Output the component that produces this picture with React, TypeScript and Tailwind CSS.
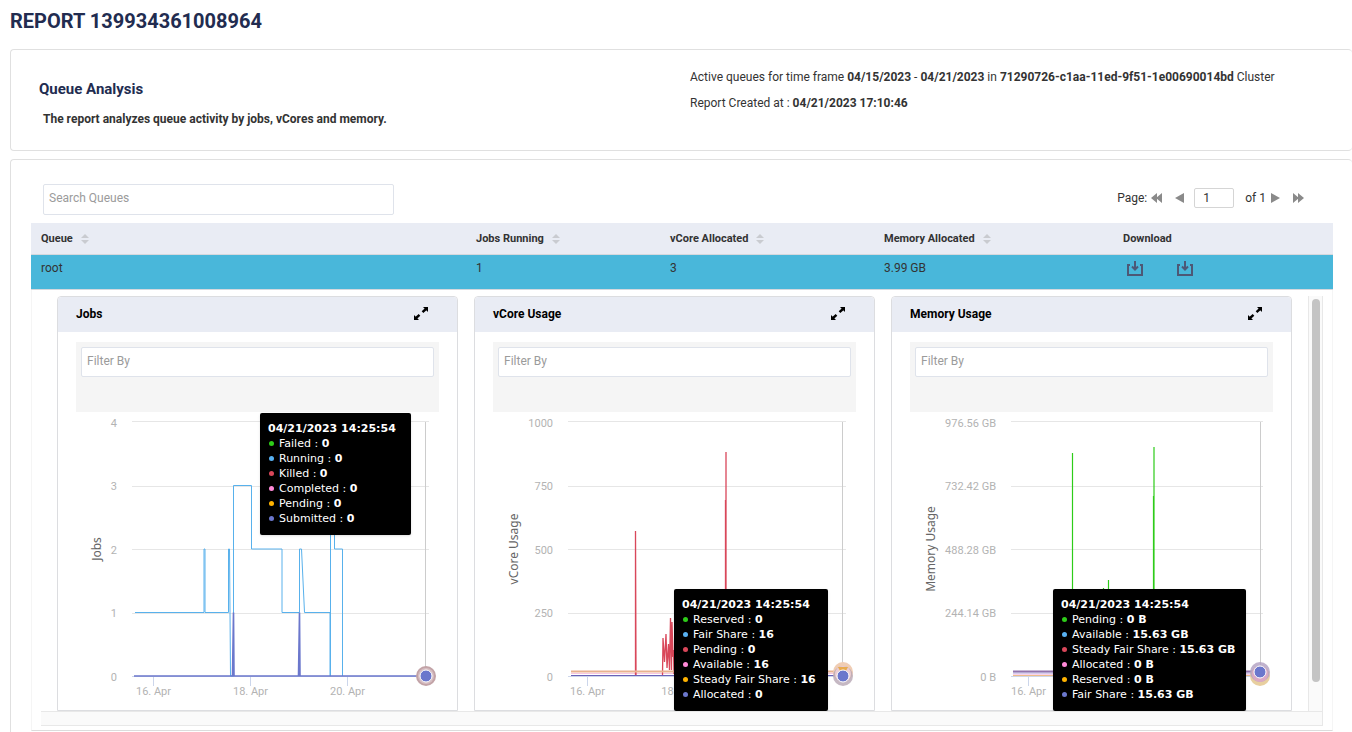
import { useState } from "react";

const GRID_Y = [9.5, 74.5, 137.5, 201.5, 264.5];
const LABEL_Y = [15, 78, 142, 205, 269];
const DOTS = [
  "bg-[#2ecc19]",
  "bg-[#58b1f2]",
  "bg-[#d9475a]",
  "bg-[#ff8ad8]",
  "bg-[#ffb300]",
  "bg-[#6b77cc]",
];

const jobs = {
  title: "Jobs",
  axis: "Jobs",
  axisX: 25,
  left: 56,
  labelX: 41,
  cross: 349.5,
  labels: ["4", "3", "2", "1", "0"],
  ticks: [
    { x: 77.5, label: "16. Apr" },
    { x: 174.5, label: "18. Apr" },
    { x: 271.5, label: "20. Apr" },
  ],
  lines: [
    {
      d: "M59 200.5H128V137H129V200.5H152.5V137H153.5L154.5 264H157.5V73.5H175.5V137H206V200.5H223.5V137H225.5L228.5 200.5H254V264H254.5V73.5H258.5V137H266.5V264",
      color: "#58b1ec",
      width: 1,
    },
    {
      d: "M58 264H156.5L157.5 200.5L158 264H222.5L223.5 200.5L224 264H350",
      color: "#6b77cc",
      width: 1.6,
    },
  ],
  tooltipPos: "left-[184px] top-[1px] w-[151px]",
  values: [
    ["Failed", "0"],
    ["Running", "0"],
    ["Killed", "0"],
    ["Completed", "0"],
    ["Pending", "0"],
    ["Submitted", "0"],
  ],
};

const vcores = {
  title: "vCore Usage",
  axis: "vCore Usage",
  axisX: 25,
  left: 75,
  labelX: 60,
  cross: 349.5,
  labels: ["1000", "750", "500", "250", "0"],
  ticks: [
    { x: 94.5, label: "16. Apr" },
    { x: 174.5, label: "18" },
  ],
  lines: [
    { d: "M78 261.5H350", color: "#f7c6e0", width: 1 },
    {
      d: "M142.5 263V119L143 263M169.5 263L170 226L171.5 250L173 222L174 256L175.5 232L176.5 258L177.5 206L178.5 258L179 210L180 245L180.5 238L181 262M232.5 263V88M233 263V40",
      color: "#d9475a",
      width: 1.3,
    },
    { d: "M78 259.5H350", color: "#e9b18f", width: 2 },
    { d: "M78 263.5H350", color: "#6b62b8", width: 1 },
  ],
  tooltipPos: "left-[181px] top-[177px] w-[154px]",
  values: [
    ["Reserved", "0"],
    ["Fair Share", "16"],
    ["Pending", "0"],
    ["Available", "16"],
    ["Steady Fair Share", "16"],
    ["Allocated", "0"],
  ],
};

const memory = {
  title: "Memory Usage",
  axis: "Memory Usage",
  axisX: 25,
  left: 101,
  labelX: 86,
  cross: 350.5,
  labels: ["976.56 GB", "732.42 GB", "488.28 GB", "244.14 GB", "0 B"],
  ticks: [{ x: 118.5, label: "16. Apr" }],
  lines: [
    {
      d: "M162.5 263V41M193.5 263V176M198.5 263V168M243.5 263V84M244 263V35",
      color: "#2ecc19",
      width: 1.2,
    },
    { d: "M103 263.5H350", color: "#edbd8b", width: 1 },
    { d: "M103 262H350", color: "#f3a8d8", width: 1 },
    { d: "M103 261H350", color: "#b5c3ee", width: 1 },
    { d: "M103 259.5H350", color: "#9273ad", width: 2 },
  ],
  tooltipPos: "left-[143px] top-[177px] w-[193px]",
  values: [
    ["Pending", "0 B"],
    ["Available", "15.63 GB"],
    ["Steady Fair Share", "15.63 GB"],
    ["Allocated", "0 B"],
    ["Reserved", "0 B"],
    ["Fair Share", "15.63 GB"],
  ],
};

function JobsMarker() {
  return (
    <g>
      <circle cx="350" cy="264" r="10" fill="#c2a3a7" />
      <circle cx="350" cy="264" r="8" fill="#d7bfc3" />
      <circle cx="350" cy="264" r="6" fill="#6b77cc" stroke="#fff" />
    </g>
  );
}

function VCoreMarker() {
  return (
    <g>
      <circle cx="350" cy="260" r="10" fill="#f0cdb4" />
      <circle cx="350" cy="264" r="10" fill="#b7a6b4" fillOpacity="0.8" />
      <circle cx="350" cy="262" r="8" fill="#eccdd2" />
      <path d="M345 255H355L353 259H347Z" fill="#e8ab4e" />
      <circle cx="350" cy="264" r="6" fill="#6b77cc" stroke="#fff" />
    </g>
  );
}

function MemoryMarker() {
  return (
    <g>
      <circle cx="350" cy="264" r="10" fill="#e8cf9f" />
      <circle cx="350" cy="260" r="10" fill="#b09fc0" fillOpacity="0.8" />
      <circle cx="350" cy="262" r="8" fill="#dba9c4" />
      <circle cx="350" cy="260" r="6" fill="#6b77cc" stroke="#fff" />
    </g>
  );
}

function SortIcon() {
  return (
    <svg width="8" height="10" viewBox="0 0 8 10" fill="#c9cbd0">
      <path d="M4 0L8 4H0Z" />
      <path d="M0 6H8L4 10Z" />
    </svg>
  );
}

function DownloadIcon() {
  return (
    <svg width="16" height="15" viewBox="0 0 16 15" fill="none" stroke="#4d5876">
      <path d="M3 4H1V14H15V4H13" strokeWidth="2" />
      <path d="M8 0V8" strokeWidth="2" />
      <path d="M5 5.5L8 8.5L11 5.5" strokeWidth="2" />
    </svg>
  );
}

function ExpandIcon() {
  return (
    <svg width="14" height="13" viewBox="0 0 14 13">
      <path d="M9 0H14V5Z" />
      <path d="M0 8V13H5Z" />
      <path d="M12.5 1.5L8.5 5.2M1.5 11.5L5.5 7.8" stroke="#000" strokeWidth="2.4" />
    </svg>
  );
}

function Chart({ data, marker }) {
  return (
    <div className="relative h-[320px]">
      <svg width="363" height="320" fontFamily="Roboto, sans-serif" fontSize="11">
        {GRID_Y.map((y, i) => (
          <line
            key={y}
            x1={data.left}
            x2="353"
            y1={y}
            y2={y}
            stroke={i === 4 ? "#ccd6eb" : "#e6e6e6"}
          />
        ))}
        {data.labels.map((label, i) => (
          <text key={label} x={data.labelX} y={LABEL_Y[i]} textAnchor="end" fill="#b3b3b3">
            {label}
          </text>
        ))}
        {data.ticks.map((tick) => (
          <g key={tick.label}>
            {tick.label !== "18" && (
              <line x1={tick.x} x2={tick.x} y1="265" y2="274" stroke="#ccd6eb" />
            )}
            <text x={tick.x} y="283" textAnchor="middle" fill="#b3b3b3">
              {tick.label}
            </text>
          </g>
        ))}
        <text
          transform={`translate(${data.axisX} 137) rotate(-90)`}
          textAnchor="middle"
          fill="#666"
          fontFamily="'Noto Sans', sans-serif"
          fontSize="12"
        >
          {data.axis}
        </text>
        <line x1={data.cross} x2={data.cross} y1="10" y2="264" stroke="#ccc" />
        {data.lines.map((line) => (
          <path key={line.d} d={line.d} fill="none" stroke={line.color} strokeWidth={line.width} />
        ))}
        {marker}
      </svg>
      <div
        className={`absolute ${data.tooltipPos} h-[122px] rounded-xs bg-black p-2 font-['DejaVu_Sans',sans-serif] text-[11px] leading-[15px] whitespace-nowrap text-white shadow-sm`}
      >
        <div className="font-bold">04/21/2023 14:25:54</div>
        {data.values.map(([name, value], i) => (
          <div key={name} className="flex items-center gap-[5px] pl-px">
            <span className={`size-[5px] rounded-full ${DOTS[i]}`} />
            <span>
              {name} : <b>{value}</b>
            </span>
          </div>
        ))}
      </div>
    </div>
  );
}

function ChartCard({ data, marker }) {
  return (
    <div className="min-w-0 flex-1 rounded-t border border-[#dcdde0]">
      <div className="flex h-[35px] items-center justify-between rounded-t bg-[#e9ecf4] pr-[29px] pb-[2px] pl-[18px]">
        <h3 className="text-xs font-bold text-black">{data.title}</h3>
        <button aria-label={`Expand ${data.title}`}>
          <ExpandIcon />
        </button>
      </div>
      <div className="px-[18px] pt-[10px]">
        <div className="h-[70px] bg-[#f5f5f5] p-[5px]">
          <input
            aria-label={`Filter ${data.title}`}
            placeholder="Filter By"
            className="h-[30px] w-full rounded-xs border border-[#dfe3eb] bg-white px-[5px] pb-[2px] text-xs placeholder:text-[#9b9b9b]"
          />
        </div>
        <Chart data={data} marker={marker} />
      </div>
    </div>
  );
}

function HeaderCell({ label, width }) {
  return (
    <th className={`${width} border-b border-[#d5d8dd] px-[10px] pt-px text-left text-[11px] font-bold`}>
      <button className="flex items-center gap-2">
        {label}
        <SortIcon />
      </button>
    </th>
  );
}

function Pager() {
  const [page, setPage] = useState("1");

  return (
    <div className="flex items-center text-xs">
      <label htmlFor="page">Page:</label>
      <button aria-label="First page" className="ml-1">
        <svg width="13" height="10" viewBox="0 0 13 10" fill="#8a8a8a">
          <path d="M6 0V10L0 5ZM11 0V10L5 5Z" />
        </svg>
      </button>
      <button aria-label="Previous page" className="ml-[11px]">
        <svg width="9" height="10" viewBox="0 0 9 10" fill="#8a8a8a">
          <path d="M9 0V10L0 5Z" />
        </svg>
      </button>
      <input
        id="page"
        value={page}
        onChange={(e) => setPage(e.target.value)}
        className="mr-[11px] ml-[10px] h-5 w-10 rounded-xs border border-[#d5d5d5] px-2"
      />
      <span>of 1</span>
      <button aria-label="Next page" className="ml-[5px]">
        <svg width="9" height="10" viewBox="0 0 9 10" fill="#8a8a8a">
          <path d="M0 0V10L9 5Z" />
        </svg>
      </button>
      <button aria-label="Last page" className="ml-[13px]">
        <svg width="11" height="10" viewBox="0 0 11 10" fill="#8a8a8a">
          <path d="M0 0V10L6 5ZM5 0V10L11 5Z" />
        </svg>
      </button>
    </div>
  );
}

function QueueTable() {
  return (
    <table className="w-full table-fixed border-separate border-spacing-0 text-xs">
      <thead>
        <tr className="h-8 bg-[#e9ecf4]">
          <HeaderCell label="Queue" width="w-auto" />
          <HeaderCell label="Jobs Running" width="w-[194px]" />
          <HeaderCell label="vCore Allocated" width="w-[214px]" />
          <HeaderCell label="Memory Allocated" width="w-[239px]" />
          <th className="w-[220px] border-b border-[#d5d8dd] px-[10px] pt-px text-left text-[11px] font-bold">
            Download
          </th>
        </tr>
      </thead>
      <tbody>
        <tr className="h-[35px] bg-[#49b7da] align-top">
          <td className="border-b border-[#d5d8dd] px-[10px] pt-[5px]">root</td>
          <td className="border-b border-[#d5d8dd] px-[10px] pt-[5px]">1</td>
          <td className="border-b border-[#d5d8dd] px-[10px] pt-[5px]">3</td>
          <td className="border-b border-[#d5d8dd] px-[10px] pt-[5px]">3.99 GB</td>
          <td className="border-b border-[#d5d8dd] px-[14px] pt-[6px]">
            <div className="flex gap-[34px]">
              <button aria-label="Download report">
                <DownloadIcon />
              </button>
              <button aria-label="Download data">
                <DownloadIcon />
              </button>
            </div>
          </td>
        </tr>
        <tr>
          <td
            colSpan={5}
            className="border-x border-b border-x-[#f5f5f5] border-b-[#dcdcdc] px-[9px] pt-[6px] pb-1"
          >
            <div className="flex">
              <div className="flex h-[415px] min-w-0 flex-1 gap-4 overflow-hidden px-4">
                <ChartCard data={jobs} marker={<JobsMarker />} />
                <ChartCard data={vcores} marker={<VCoreMarker />} />
                <ChartCard data={memory} marker={<MemoryMarker />} />
              </div>
              <div className="w-[15px] border-x border-[#e8e8e8] bg-[#fafafa] px-[3px] pt-[3px]">
                <div className="-mr-px h-[383px] rounded-full bg-[#c4c4c4]" />
              </div>
            </div>
            <div className="h-[15px] border-y border-r border-[#e8e8e8] bg-[#fafafa]" />
          </td>
        </tr>
      </tbody>
    </table>
  );
}

function App() {
  return (
    <div className="overflow-hidden bg-white pl-[10px] font-[Roboto,sans-serif] text-[#333]">
      <h1 className="pt-[6px] text-xl leading-[30px] font-bold text-[#222c50]">
        REPORT 139934361008964
      </h1>

      <section className="mt-[13px] flex h-[102px] rounded border border-r-0 border-[#e0e0e0] pl-7">
        <div className="w-[651px] pt-[29px]">
          <h2 className="text-[15px] leading-5 font-bold text-[#222c50]">Queue Analysis</h2>
          <p className="mt-[10px] pl-1 text-xs leading-5 font-bold">
            The report analyzes queue activity by jobs, vCores and memory.
          </p>
        </div>
        <div className="flex-1 pt-[14px] text-xs leading-[26px]">
          <p>
            Active queues for time frame <b>04/15/2023</b> - <b>04/21/2023</b> in{" "}
            <b>71290726-c1aa-11ed-9f51-1e00690014bd</b> Cluster
          </p>
          <p>
            Report Created at : <b>04/21/2023 17:10:46</b>
          </p>
        </div>
      </section>

      <section className="mt-2 rounded-t border border-r-0 border-b-0 border-[#e0e0e0] pt-6 pr-[19px] pb-5 pl-5">
        <div className="flex items-start justify-between pr-[29px] pb-2 pl-3">
          <input
            aria-label="Search Queues"
            placeholder="Search Queues"
            className="h-[31px] w-[351px] rounded-xs border border-[#dfe3eb] px-[5px] pb-[3px] text-xs placeholder:text-[#9b9b9b]"
          />
          <div className="pt-1">
            <Pager />
          </div>
        </div>
        <QueueTable />
      </section>
    </div>
  );
}

export default App;
